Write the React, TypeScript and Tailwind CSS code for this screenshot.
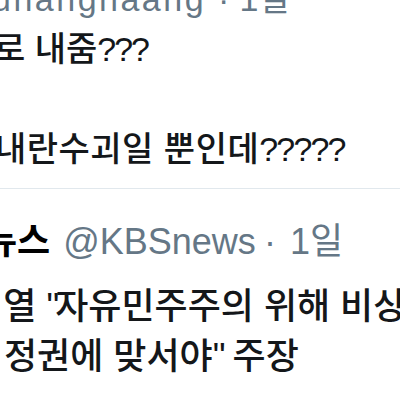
export default function App() {
  return (
    <div className="h-[400px] w-[400px] overflow-hidden bg-white font-['Liberation_Sans','Noto_Sans_CJK_KR',sans-serif] leading-[50px] text-[#14171a]">
      {/* reply tweet, cropped on the left and top */}
      <section className="-mt-[26px] border-b border-[#e1e8ed] pb-[14px] text-[34px]">
        <div className="-ml-[8px] flex items-baseline whitespace-nowrap text-[#657786]">
          <span className="tracking-[2.5px]">uhanghaang</span>
          <span className="ml-[12px]">·</span>
          <span className="ml-[10px]">1일</span>
        </div>
        <p className="-ml-[6px] whitespace-nowrap font-medium">
          로 내줌<span className="tracking-[-2px]">???</span>
        </p>
        <p className="h-[50px]" />
        <p className="-ml-[5px] whitespace-nowrap font-medium tracking-[0.5px]">
          내란수괴일 뿐인데<span className="tracking-[-1.8px]">?????</span>
        </p>
      </section>

      {/* KBS tweet */}
      <section className="pt-[28px] text-[36px]">
        <div className="flex items-baseline whitespace-nowrap">
          <span className="-ml-[16px] font-bold text-black">뉴스</span>
          <span className="ml-[13px] text-[#657786]">@KBSnews</span>
          <span className="ml-[8px] text-[#657786]">·</span>
          <span className="ml-[14px] text-[#657786]">1일</span>
        </div>
        <div className="mt-[15px] font-medium">
          <p className="-ml-[63px] whitespace-nowrap">
            윤석열 <span className="tracking-[-4px]">"</span>자유민주주의 위해 비상계엄
          </p>
          <p className="ml-[4px] whitespace-nowrap">
            정권에 맞서야<span className="tracking-[-3px]">"</span> 주장
          </p>
        </div>
      </section>
    </div>
  );
}
